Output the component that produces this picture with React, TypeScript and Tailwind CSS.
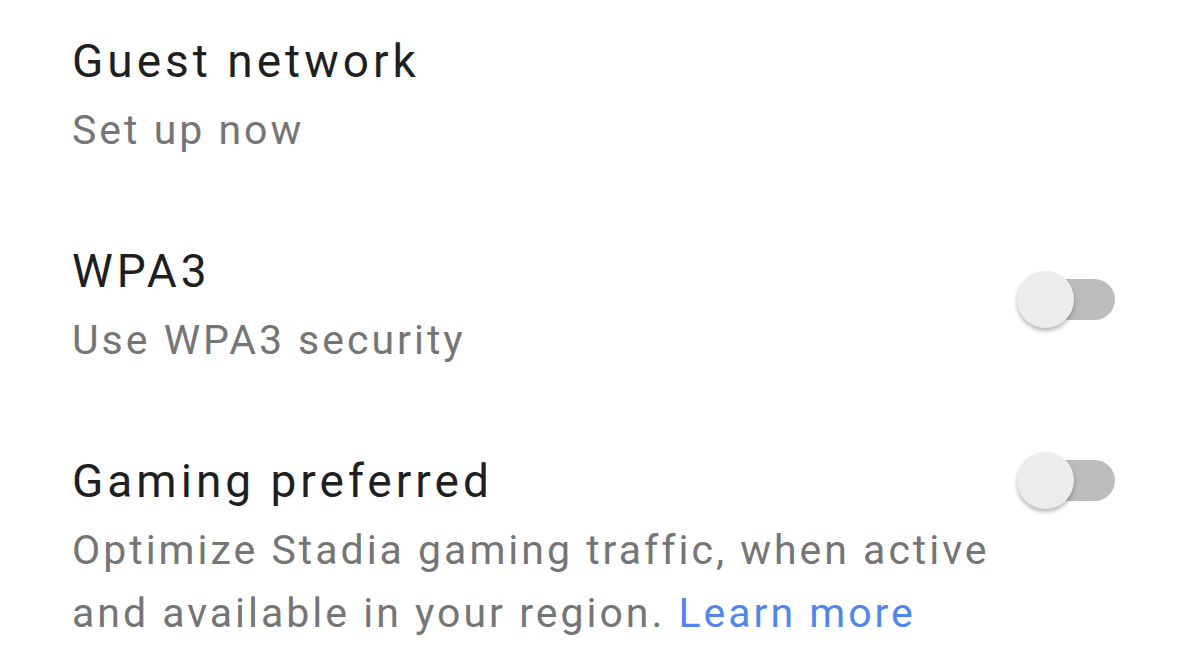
interface SettingRow {
  id: string;
  title: string;
  summary: string;
  link?: string;
  toggle: boolean;
  toggleOffset: string;
}

const rows: SettingRow[] = [
  { id: "guest", title: "Guest network", summary: "Set up now", toggle: false, toggleOffset: "" },
  { id: "wpa3", title: "WPA3", summary: "Use WPA3 security", toggle: true, toggleOffset: "mt-[28px]" },
  {
    id: "gaming",
    title: "Gaming preferred",
    summary: "Optimize Stadia gaming traffic, when active and available in your region.",
    link: "Learn more",
    toggle: true,
    toggleOffset: "mt-[-1px]",
  },
];

function Toggle({ className }: { className: string }) {
  return (
    <div className={`relative h-[57px] w-[98px] shrink-0 ${className}`}>
      <div className="absolute right-0 top-[8px] h-[41px] w-[94px] rounded-full bg-[#bcbcbc]" />
      <div className="absolute left-0 top-0 size-[57px] rounded-full bg-[#ececec] shadow-[0_3px_4px_rgba(0,0,0,0.28)]" />
    </div>
  );
}

export default function App() {
  return (
    <div className="h-[671px] w-[1200px] overflow-hidden bg-white font-['Roboto',sans-serif]">
      <div className="flex flex-col gap-[81px] pl-[72px] pr-[85px] pt-[33px]">
        {rows.map((row) => (
          <div key={row.id} className="flex items-start">
            <div className="w-[930px]">
              <div className="text-[46px] leading-[56px] tracking-[4px] text-[#1f1f1f]">{row.title}</div>
              <p className="mt-[10px] text-[41px] leading-[63px] tracking-[3px] text-[#757575]">
                {row.summary}
                {row.link && <span className="text-[#4f86ec]"> {row.link}</span>}
              </p>
            </div>
            {row.toggle && <Toggle className={`ml-auto ${row.toggleOffset}`} />}
          </div>
        ))}
      </div>
    </div>
  );
}
